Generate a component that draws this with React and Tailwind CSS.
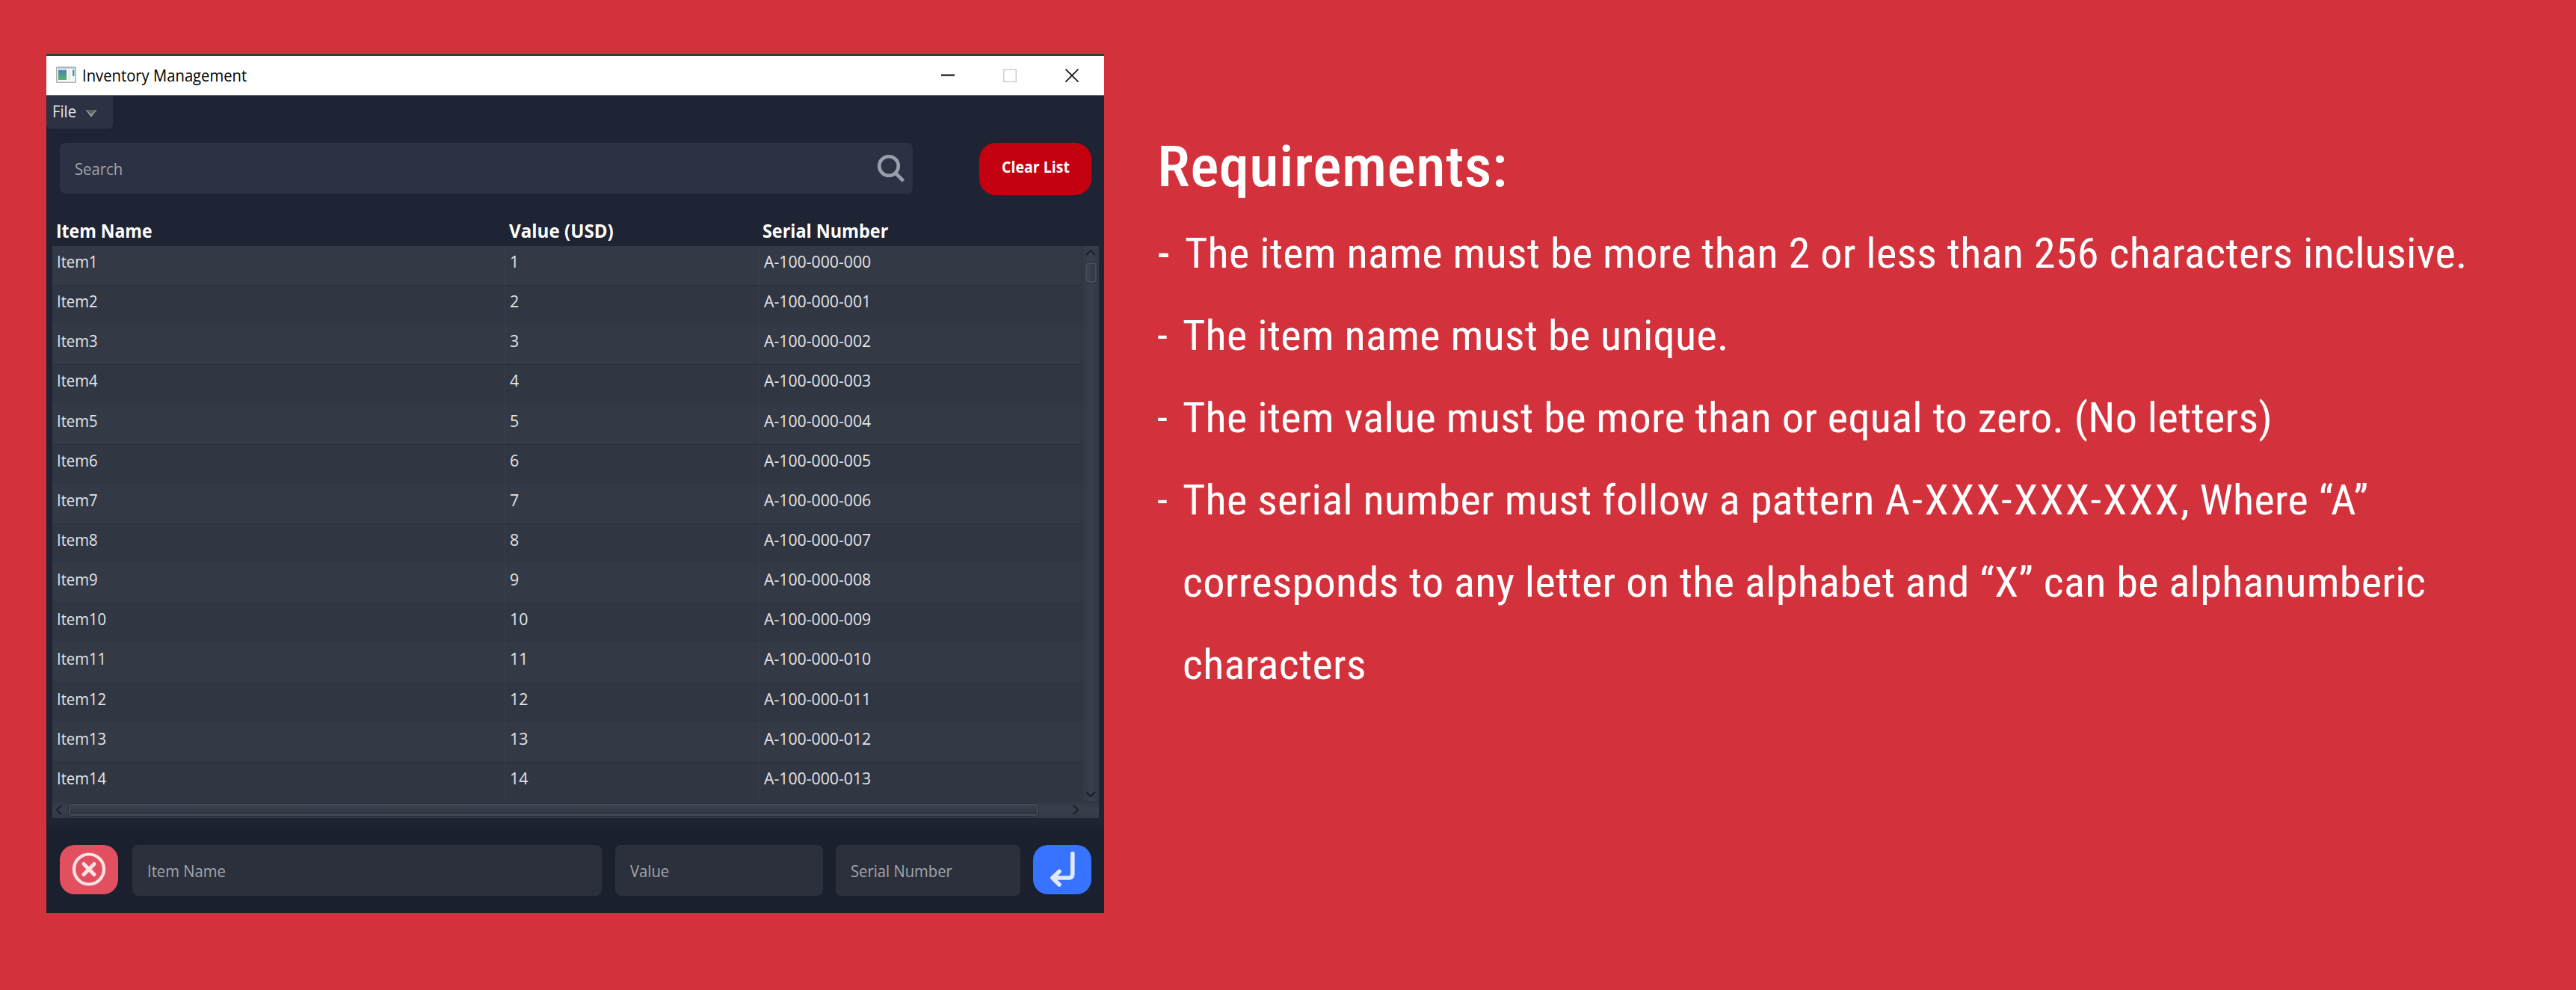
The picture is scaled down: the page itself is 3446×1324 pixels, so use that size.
const items = Array.from({ length: 14 }, (_, i) => ({
  name: `Item${i + 1}`,
  value: i + 1,
  serial: `A-100-000-${String(i).padStart(3, "0")}`,
}));

// Slightly narrowed interface lettering.
function Label({ children, className = "scale-x-[0.92]" }) {
  return <span className={`inline-block origin-left whitespace-nowrap ${className}`}>{children}</span>;
}

function TitleBar() {
  return (
    <header className="flex h-14 shrink-0 items-center border-t-[3px] border-b border-t-[#3a3a3c] border-b-[#6b6f78] bg-white pl-[13px]">
      <svg className="mb-0.5 h-[22px] w-[27px]" viewBox="0 0 27 22">
        <defs>
          <linearGradient id="pane" x1="0" y1="0" x2="0" y2="1">
            <stop offset="0" stopColor="#4a7fb5" />
            <stop offset="1" stopColor="#58b368" />
          </linearGradient>
        </defs>
        <rect x="0.75" y="0.75" width="25.5" height="20.5" rx="1" fill="#f7f8f9" stroke="#a9afb6" strokeWidth="1.5" />
        <path d="M1 1.7H26" stroke="#b4bac1" strokeWidth="2" />
        <rect x="3" y="4.5" width="11" height="13.5" fill="url(#pane)" />
        <rect x="16" y="4.5" width="4" height="13.5" fill="#ebedef" />
        <rect x="22" y="4.5" width="2.5" height="8.5" fill="url(#pane)" />
      </svg>
      <h1 className="ml-2 flex-1 pb-px text-[22px] text-black">
        <Label>Inventory Management</Label>
      </h1>
      <div className="flex items-center gap-[65px] pr-[34px]">
        <svg className="h-[18px] w-[18px]" viewBox="0 0 18 18" fill="none">
          <path d="M0 8.5H18" stroke="#000" strokeWidth="2" />
        </svg>
        <svg className="h-[18px] w-[18px]" viewBox="0 0 18 18" fill="none">
          <rect x="0.75" y="0.75" width="16.5" height="16.5" stroke="#cfcfcf" strokeWidth="1.5" />
        </svg>
        <svg className="h-[18px] w-[18px]" viewBox="0 0 18 18" fill="none">
          <path d="M0.5 0.5L17.5 17.5M17.5 0.5L0.5 17.5" stroke="#111" strokeWidth="1.6" />
        </svg>
      </div>
    </header>
  );
}

function SearchIcon() {
  return (
    <svg className="h-[38px] w-[38px]" viewBox="0 0 38 38" fill="none" stroke="#9a9daa">
      <circle cx="16" cy="16" r="12.8" strokeWidth="4.6" />
      <path d="M25.5 26L35.5 36" strokeWidth="4.6" />
    </svg>
  );
}

function Row({ item, odd }) {
  return (
    <div
      className={`flex h-[53.15px] shrink-0 border-b leading-[40px] ${
        odd ? "border-b-[#2b303d] bg-[#343946]" : "border-b-[#353a48] bg-[#313643]"
      }`}
    >
      <div className="w-[606px] border-r border-[#3a3f4d] pl-1.5">
        <Label>{item.name}</Label>
      </div>
      <div className="w-[340px] border-r border-[#3a3f4d] pl-1.5">
        <Label className="scale-x-[0.97]">{item.value}</Label>
      </div>
      <div className="flex-1 pl-1.5">
        <Label className="scale-x-[0.965]">{item.serial}</Label>
      </div>
    </div>
  );
}

function Chevron({ d, className }) {
  return (
    <svg className={className} viewBox="0 0 14 14" fill="none" stroke="#1e222c" strokeWidth="2.4">
      <path d={d} />
    </svg>
  );
}

function Table() {
  return (
    <section className="mr-[7px] ml-2 flex h-[765px] flex-col bg-[#343946]">
      <div className="flex h-[742px]">
        <div className="flex flex-1 flex-col overflow-hidden text-[22px] text-[#e4e5e8]">
          {items.map((item, i) => (
            <Row key={item.name} item={item} odd={i % 2 === 0} />
          ))}
        </div>
        <div className="flex w-6 flex-col items-center border-l-2 border-[#303542] bg-linear-to-r from-[#333845] via-[#3a3f4d] to-[#333845] pt-[2px]">
          <Chevron className="h-3.5 w-3.5" d="M1 10L7 4L13 10" />
          <div className="mt-1.5 h-[27px] w-[15px] rounded-[4px] border-2 border-[#474d5d] bg-linear-to-r from-[#3c4252] to-[#343946] outline-1 outline-[#282c37]" />
          <Chevron className="mt-auto mb-0.5 h-3.5 w-3.5" d="M1 4L7 10L13 4" />
        </div>
      </div>
      <div className="flex h-[23px] items-center border-t border-[#2f3340] bg-linear-to-b from-[#333845] via-[#3a3f4d] to-[#333845] pl-[3px]">
        <Chevron className="h-3.5 w-3.5" d="M9 1L3 7L9 13" />
        <div className="ml-[5px] h-4 w-[1297px] rounded-[4px] border-2 border-[#464b5a] bg-linear-to-b from-[#3b4150] to-[#30343f] outline-1 outline-[#282c37]" />
        <Chevron className="ml-[44px] h-3.5 w-3.5" d="M3 1L9 7L3 13" />
      </div>
    </section>
  );
}

function Field({ label, className }) {
  return (
    <div className={`flex h-[68px] items-center rounded-lg bg-[#2b303c] pl-5 text-[22px] text-[#a3a5a9] ${className}`}>
      <Label>{label}</Label>
    </div>
  );
}

function Footer() {
  return (
    <footer className="flex flex-1 items-start bg-[#1a202d] pt-[27px] pl-[18px]">
      <button className="flex h-[66px] w-[78px] items-center justify-center rounded-[20px] bg-[#e25060]">
        <svg className="h-[46px] w-[46px]" viewBox="0 0 46 46" fill="none" stroke="#fbe3e6">
          <circle cx="23" cy="22.5" r="20" strokeWidth="4.2" />
          <path d="M16 15.5L30 29.5M30 15.5L16 29.5" strokeWidth="5" strokeLinecap="round" />
        </svg>
      </button>
      <Field label="Item Name" className="ml-[19px] w-[628px]" />
      <Field label="Value" className="ml-[18px] w-[278px]" />
      <Field label="Serial Number" className="ml-[17px] w-[247px]" />
      <button className="ml-[17px] flex h-[66px] w-[78px] items-center justify-center rounded-[20px] bg-[#3873ff]">
        <svg
          className="h-[66px] w-[78px]"
          viewBox="0 0 78 66"
          fill="none"
          stroke="#e1e9ff"
          strokeWidth="5.6"
          strokeLinecap="round"
          strokeLinejoin="round"
        >
          <path d="M52.8 11.5V39Q52.8 44 47.8 44H26M35 35.5L26 44L35 53" />
        </svg>
      </button>
    </footer>
  );
}

function InventoryWindow() {
  return (
    <main className="flex h-[1149px] w-[1415px] shrink-0 flex-col bg-[#1e2433] font-['Open_Sans',sans-serif]">
      <TitleBar />
      <button className="flex h-11 w-[89px] items-start rounded-b-md bg-[#2c3144] pl-2 text-[22px] leading-[40px] text-[#e8e8ea]">
        <Label>File</Label>
        <svg className="mt-[19px] ml-[9px] h-2.5 w-4" viewBox="0 0 16 10">
          <path d="M0.5 0H15.5L8 9.5Z" fill="#a4a5a8" />
          <path d="M1.5 0H14.5L8 6.5Z" fill="#5f6064" />
        </svg>
      </button>
      <div className="mt-[19px] flex items-start pr-[17px] pl-[18px]">
        <div className="flex h-[68px] w-[1141px] items-center justify-between rounded-lg bg-[#2c3144] pr-[10px] pl-5 text-[22px] text-[#a3a5a9]">
          <Label>Search</Label>
          <SearchIcon />
        </div>
        <button className="ml-auto h-[70px] w-[150px] rounded-[22px] bg-[#c30010] pb-1 text-[21px] font-bold text-white">
          <Label className="ml-[7px] scale-x-[0.93]">Clear List</Label>
        </button>
      </div>
      <div className="mt-[27px] flex h-[41px] pl-[13px] text-[25px] leading-[41px] font-bold text-white">
        <div className="w-[606px]">
          <Label>Item Name</Label>
        </div>
        <div className="w-[339px]">
          <Label className="scale-x-[0.965]">Value (USD)</Label>
        </div>
        <Label className="scale-x-[0.935]">Serial Number</Label>
      </div>
      <Table />
      <div className="h-[9px]" />
      <Footer />
    </main>
  );
}

function Requirement({ children, bold }) {
  return (
    <li className="flex">
      <span className={`shrink-0 ${bold ? "w-[37px] font-medium" : "w-[34px]"}`}>-</span>
      <span className="origin-left scale-x-[1.04] whitespace-pre">{children}</span>
    </li>
  );
}

function Requirements() {
  return (
    <section className="ml-[71px] pt-[90px] font-['Roboto',sans-serif] whitespace-nowrap text-white font-stretch-condensed">
      <h2 className="origin-left scale-x-[1.06] text-[76px] leading-[122px] font-medium tracking-[0.4px]">
        Requirements:
      </h2>
      <ul className="text-[56px] leading-[110px] tracking-[0.25px]">
        <Requirement bold>The item name must be more than 2 or less than 256 characters inclusive.</Requirement>
        <Requirement>The item name must be unique.</Requirement>
        <Requirement>The item value must be more than or equal to zero. (No letters)</Requirement>
        <Requirement>
          The serial number must follow a pattern <span className="tracking-[2.4px]">A-XXX-XXX-XXX</span>, Where “A”
          <br />
          corresponds to any letter on the alphabet and “X” can be alphanumberic
          <br />
          characters
        </Requirement>
      </ul>
    </section>
  );
}

export default function App() {
  return (
    <div className="flex h-[1324px] w-[3446px] overflow-hidden bg-[#d3323c] pt-[72px] pl-[62px]">
      <InventoryWindow />
      <Requirements />
    </div>
  );
}
